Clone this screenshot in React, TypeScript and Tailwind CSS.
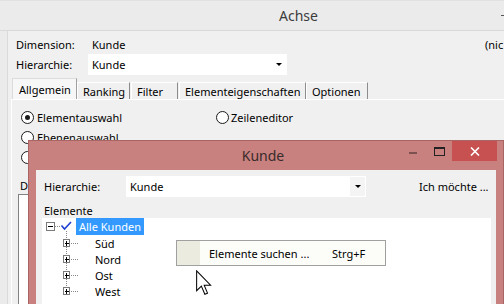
import React from 'react';

const Radio: React.FC<{ checked?: boolean }> = ({ checked }) => (
  <span className="flex h-[13px] w-[13px] shrink-0 items-center justify-center rounded-full border border-[#1a1a1a] bg-white">
    {checked && <span className="h-[5px] w-[5px] rounded-full bg-[#1a1a1a]" />}
  </span>
);

const TreeLines: React.FC = () => (
  <svg className="absolute left-0 top-0" width="60" height="90" viewBox="0 0 60 90" shapeRendering="crispEdges">
    {/* root expander */}
    <rect x="4.5" y="4.5" width="8" height="8" fill="white" stroke="#7a7a7a" />
    <line x1="6" y1="8.5" x2="11" y2="8.5" stroke="#000" />
    <line x1="13" y1="8.5" x2="19" y2="8.5" stroke="#888" strokeDasharray="1 1" />
    {/* check */}
    <path d="M19.5 7.5 L22.5 11 L29 4" fill="none" stroke="#1f3fd0" strokeWidth="1.6" shapeRendering="auto" />
    {/* children */}
    <line x1="24.5" y1="13" x2="24.5" y2="73" stroke="#888" strokeDasharray="1 1" />
    {[25, 41, 57, 73].map((cy) => (
      <g key={cy}>
        <rect x="21.5" y={cy - 3.5} width="6" height="7" fill="white" stroke="#7a7a7a" />
        <line x1="22.5" y1={cy} x2="27" y2={cy} stroke="#000" />
        <line x1="24.5" y1={cy - 2} x2="24.5" y2={cy + 3} stroke="#000" />
        <line x1="29" y1={cy} x2="36" y2={cy} stroke="#888" strokeDasharray="1 1" />
      </g>
    ))}
  </svg>
);

export default function App() {
  return (
    <div className="relative h-[304px] w-[504px] overflow-hidden bg-[#f0f0f0] font-['Noto_Sans',sans-serif] text-[11px] leading-none text-black">
      {/* Achse window */}
      <div className="flex h-full flex-col">
        <div className="flex h-[31px] shrink-0 items-center border-b border-t border-b-[#d9d9d9] border-t-[#e2e2e2] bg-[#ebebeb] pl-[279px] text-[14px] text-[#3c3c3c]">
          <span>Achse</span>
          <span className="ml-auto mr-0 h-[1px] w-[3px] bg-[#555]" />
        </div>
        <div className="flex flex-1">
          <div className="w-[8px] shrink-0 border-r border-[#dadada] bg-[#ebebeb]" />
          <div className="flex flex-1 flex-col bg-[#f0f0f0]">
            <div className="mt-[5px] flex h-[16px] items-center whitespace-nowrap pl-[8px]">
              <span className="w-[76px] shrink-0">Dimension:</span>
              <span className="w-[393px] shrink-0">Kunde</span>
              <span className="shrink-0">(nic</span>
            </div>
            <div className="mt-[2px] flex h-[21px] items-center pl-[8px]">
              <span className="w-[72px] shrink-0">Hierarchie:</span>
              <div className="flex h-full w-[199px] items-center bg-white pl-[4px]">
                <span>Kunde</span>
                <span className="ml-auto flex h-full w-[17px] items-center justify-center">
                  <span className="h-0 w-0 border-x-[3px] border-t-[3px] border-x-transparent border-t-black" />
                </span>
              </div>
            </div>
            {/* tabs */}
            <div className="mt-[4px] flex h-[20px] items-end whitespace-nowrap pl-[4px]">
              <div className="flex h-[21px] w-[65px] items-center border-l border-r border-t border-l-[#dcdcdc] border-r-[#a0a0a0] border-t-[#dcdcdc] bg-[#f7f7f7] pl-[6px]">Allgemein</div>
              <div className="flex h-[17px] w-[53px] items-center border-l border-r border-t border-l-white border-r-[#8c8c8c] border-t-white pl-[5px]">Ranking</div>
              <div className="ml-[1px] flex h-[17px] w-[47px] items-center border-l border-r border-t border-l-white border-r-[#8c8c8c] border-t-white pl-[5px]">Filter</div>
              <div className="ml-[1px] flex h-[17px] w-[127px] items-center border-l border-r border-t border-l-white border-r-[#8c8c8c] border-t-white pl-[5px]">Elementeigenschaften</div>
              <div className="flex h-[17px] w-[62px] items-center border-l border-r border-t border-l-white border-r-[#8c8c8c] border-t-white pl-[5px]">Optionen</div>
            </div>
            {/* tab panel */}
            <div className="ml-[3px] flex flex-1 flex-col border-l border-t border-white">
              <div className="mt-[7px] flex h-[20px] items-center whitespace-nowrap pl-[9px]">
                <div className="flex w-[195px] shrink-0 items-center gap-[3px]">
                  <Radio checked />
                  <span>Elementauswahl</span>
                </div>
                <div className="flex items-center gap-[2px]">
                  <Radio />
                  <span>Zeileneditor</span>
                </div>
              </div>
              <div className="flex h-[20px] items-center gap-[3px] pl-[9px]">
                <Radio />
                <span>Ebenenauswahl</span>
              </div>
              <div className="flex h-[20px] items-center pl-[9px]">
                <Radio />
              </div>
              <div className="mt-[10px] flex h-[16px] items-center pl-[8px]">
                <span>D</span>
              </div>
              <div className="ml-[6px] mt-[1px] h-[200px] w-[200px] border-l border-t border-[#828282] bg-white" />
            </div>
          </div>
        </div>
      </div>

      {/* Kunde dialog */}
      <div className="absolute left-[28px] top-[140px] flex h-[170px] w-[476px] flex-col border border-[#a86563] bg-[#c8817f]">
        <div className="flex h-[29px] shrink-0">
          <div className="flex-1" />
          <div className="flex items-center pt-[1px] text-[14px] text-[#3a2b2b]">Kunde</div>
          <div className="flex flex-1 justify-end pr-[6px]">
            <div className="flex h-[20px]">
              <div className="flex w-[27px] items-center justify-center pt-[4px]">
                <span className="h-[2px] w-[8px] bg-[#7d5150]" />
              </div>
              <div className="flex w-[26px] items-center justify-center">
                <span className="h-[9px] w-[11px] border border-t-2 border-[#222]" />
              </div>
              <div className="flex w-[45px] items-center justify-center bg-[#c75050]">
                <svg width="10" height="9" viewBox="0 0 10 9">
                  <path d="M1 0.5 L9 8.5 M9 0.5 L1 8.5" stroke="white" strokeWidth="1.6" />
                </svg>
              </div>
            </div>
          </div>
        </div>
        <div className="mx-[7px] flex flex-1 flex-col bg-[#f0f0f0]">
          <div className="mt-[6px] flex h-[21px] items-center whitespace-nowrap pl-[8px]">
            <span className="w-[82px] shrink-0">Hierarchie:</span>
            <div className="flex h-full w-[240px] shrink-0 items-center bg-white pl-[4px]">
              <span>Kunde</span>
              <span className="ml-auto flex h-full w-[17px] items-center justify-center border border-white bg-[#f4f4f4]">
                <span className="h-0 w-0 border-x-[3px] border-t-[3px] border-x-transparent border-t-black" />
              </span>
            </div>
            <span className="ml-[53px]">Ich möchte ...</span>
          </div>
          <div className="mt-[6px] flex h-[15px] items-center pl-[8px]">Elemente</div>
          <div className="relative ml-[6px] mr-[5px] flex-1 bg-white">
            <TreeLines />
            <div className="flex h-[17px] items-center pl-[34px]">
              <span className="flex h-full items-center bg-[#3399ff] px-[3px] text-white">Alle Kunden</span>
            </div>
            {['Süd', 'Nord', 'Ost', 'West'].map((n) => (
              <div key={n} className="flex h-[16px] items-center pl-[53px]">
                {n}
              </div>
            ))}
          </div>
        </div>
      </div>

      {/* context menu */}
      <div className="absolute left-[176px] top-[240px] flex h-[26px] w-[210px] border border-[#a0a0a0] bg-[#fcfcf9]">
        <div className="w-[23px] bg-[#ecebe0]" />
        <div className="flex flex-1 items-center pl-[9px] whitespace-nowrap">
          <span className="w-[123px]">Elemente suchen ...</span>
          <span>Strg+F</span>
        </div>
      </div>

      {/* mouse cursor */}
      <svg className="absolute left-[196px] top-[270px]" width="16" height="26" viewBox="0 0 12.5 20">
        <path d="M0.5 0.5 L0.5 16 L4.2 12.4 L6.9 18.8 L9 17.9 L6.4 11.7 L11.4 11.7 Z" fill="white" stroke="black" strokeWidth="0.8" strokeLinejoin="miter" />
      </svg>
    </div>
  );
}
